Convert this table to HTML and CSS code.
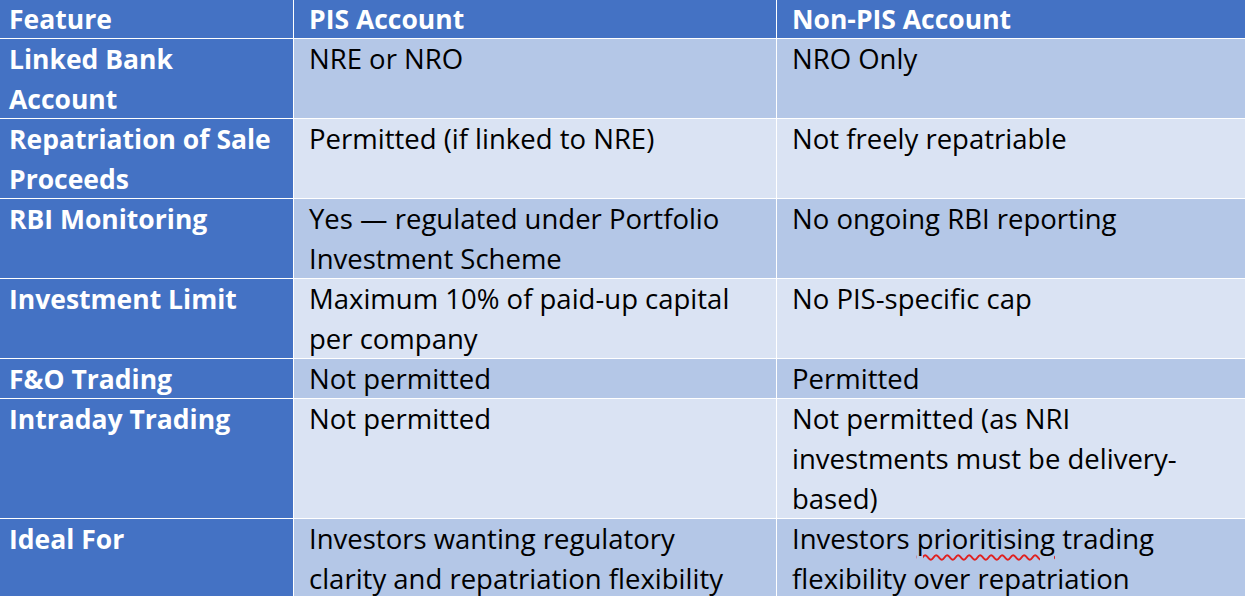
FILE: index.html
```html
<!DOCTYPE html>
<html>
<head>
<meta charset="utf-8">
<link rel="stylesheet" href="styles.css">
</head>
<body>
<div class="table">
  <div class="cell head first">Feature</div>
  <div class="cell head">PIS Account</div>
  <div class="cell head">Non-PIS Account</div>

  <div class="cell label">Linked Bank<br>Account</div>
  <div class="cell odd">NRE or NRO</div>
  <div class="cell odd">NRO Only</div>

  <div class="cell label">Repatriation of Sale<br>Proceeds</div>
  <div class="cell even">Permitted (if linked to NRE)</div>
  <div class="cell even">Not freely repatriable</div>

  <div class="cell label">RBI Monitoring</div>
  <div class="cell odd">Yes — regulated under Portfolio<br>Investment Scheme</div>
  <div class="cell odd">No ongoing RBI reporting</div>

  <div class="cell label">Investment Limit</div>
  <div class="cell even">Maximum 10% of paid-up capital<br>per company</div>
  <div class="cell even">No PIS-specific cap</div>

  <div class="cell label">F&amp;O Trading</div>
  <div class="cell odd">Not permitted</div>
  <div class="cell odd">Permitted</div>

  <div class="cell label">Intraday Trading</div>
  <div class="cell even">Not permitted</div>
  <div class="cell even">Not permitted (as NRI<br>investments must be delivery-<br>based)</div>

  <div class="cell label">Ideal For</div>
  <div class="cell odd">Investors wanting regulatory<br>clarity and repatriation flexibility</div>
  <div class="cell odd">Investors <span class="spell">prioritising</span> trading<br>flexibility over repatriation</div>
</div>
</body>
</html>
```
FILE: styles.css
```css
html, body {
  margin: 0;
  padding: 0;
  background: #ffffff;
  overflow: hidden;
}
.table {
  display: grid;
  grid-template-columns: 293px 482px 1fr;
  grid-template-rows: 38px 79px 79px 79px 79px 39px 119px 79px;
  gap: 1px;
  background: #ffffff;
  width: 1245px;
  height: 596px;
  font-family: "Open Sans", "Lato", sans-serif;
  font-size: 27.5px;
  line-height: 40px;
  color: #000000;
}
.cell {
  padding: 0 8px 0 15px;
  overflow: hidden;
  white-space: nowrap;
}
.head {
  background: #4472c4;
  color: #ffffff;
  font-weight: 700;
  font-size: 26.5px;
  line-height: 38px;
}
.first, .label {
  padding-left: 9px;
}
.label {
  background: #4472c4;
  color: #ffffff;
  font-weight: 700;
  font-size: 26.5px;
}
.odd {
  background: #b4c7e7;
}
.even {
  background: #dae3f3;
}
.spell {
  text-decoration: underline wavy #e02020;
  text-decoration-thickness: 1.5px;
  text-underline-offset: 5px;
}
```
